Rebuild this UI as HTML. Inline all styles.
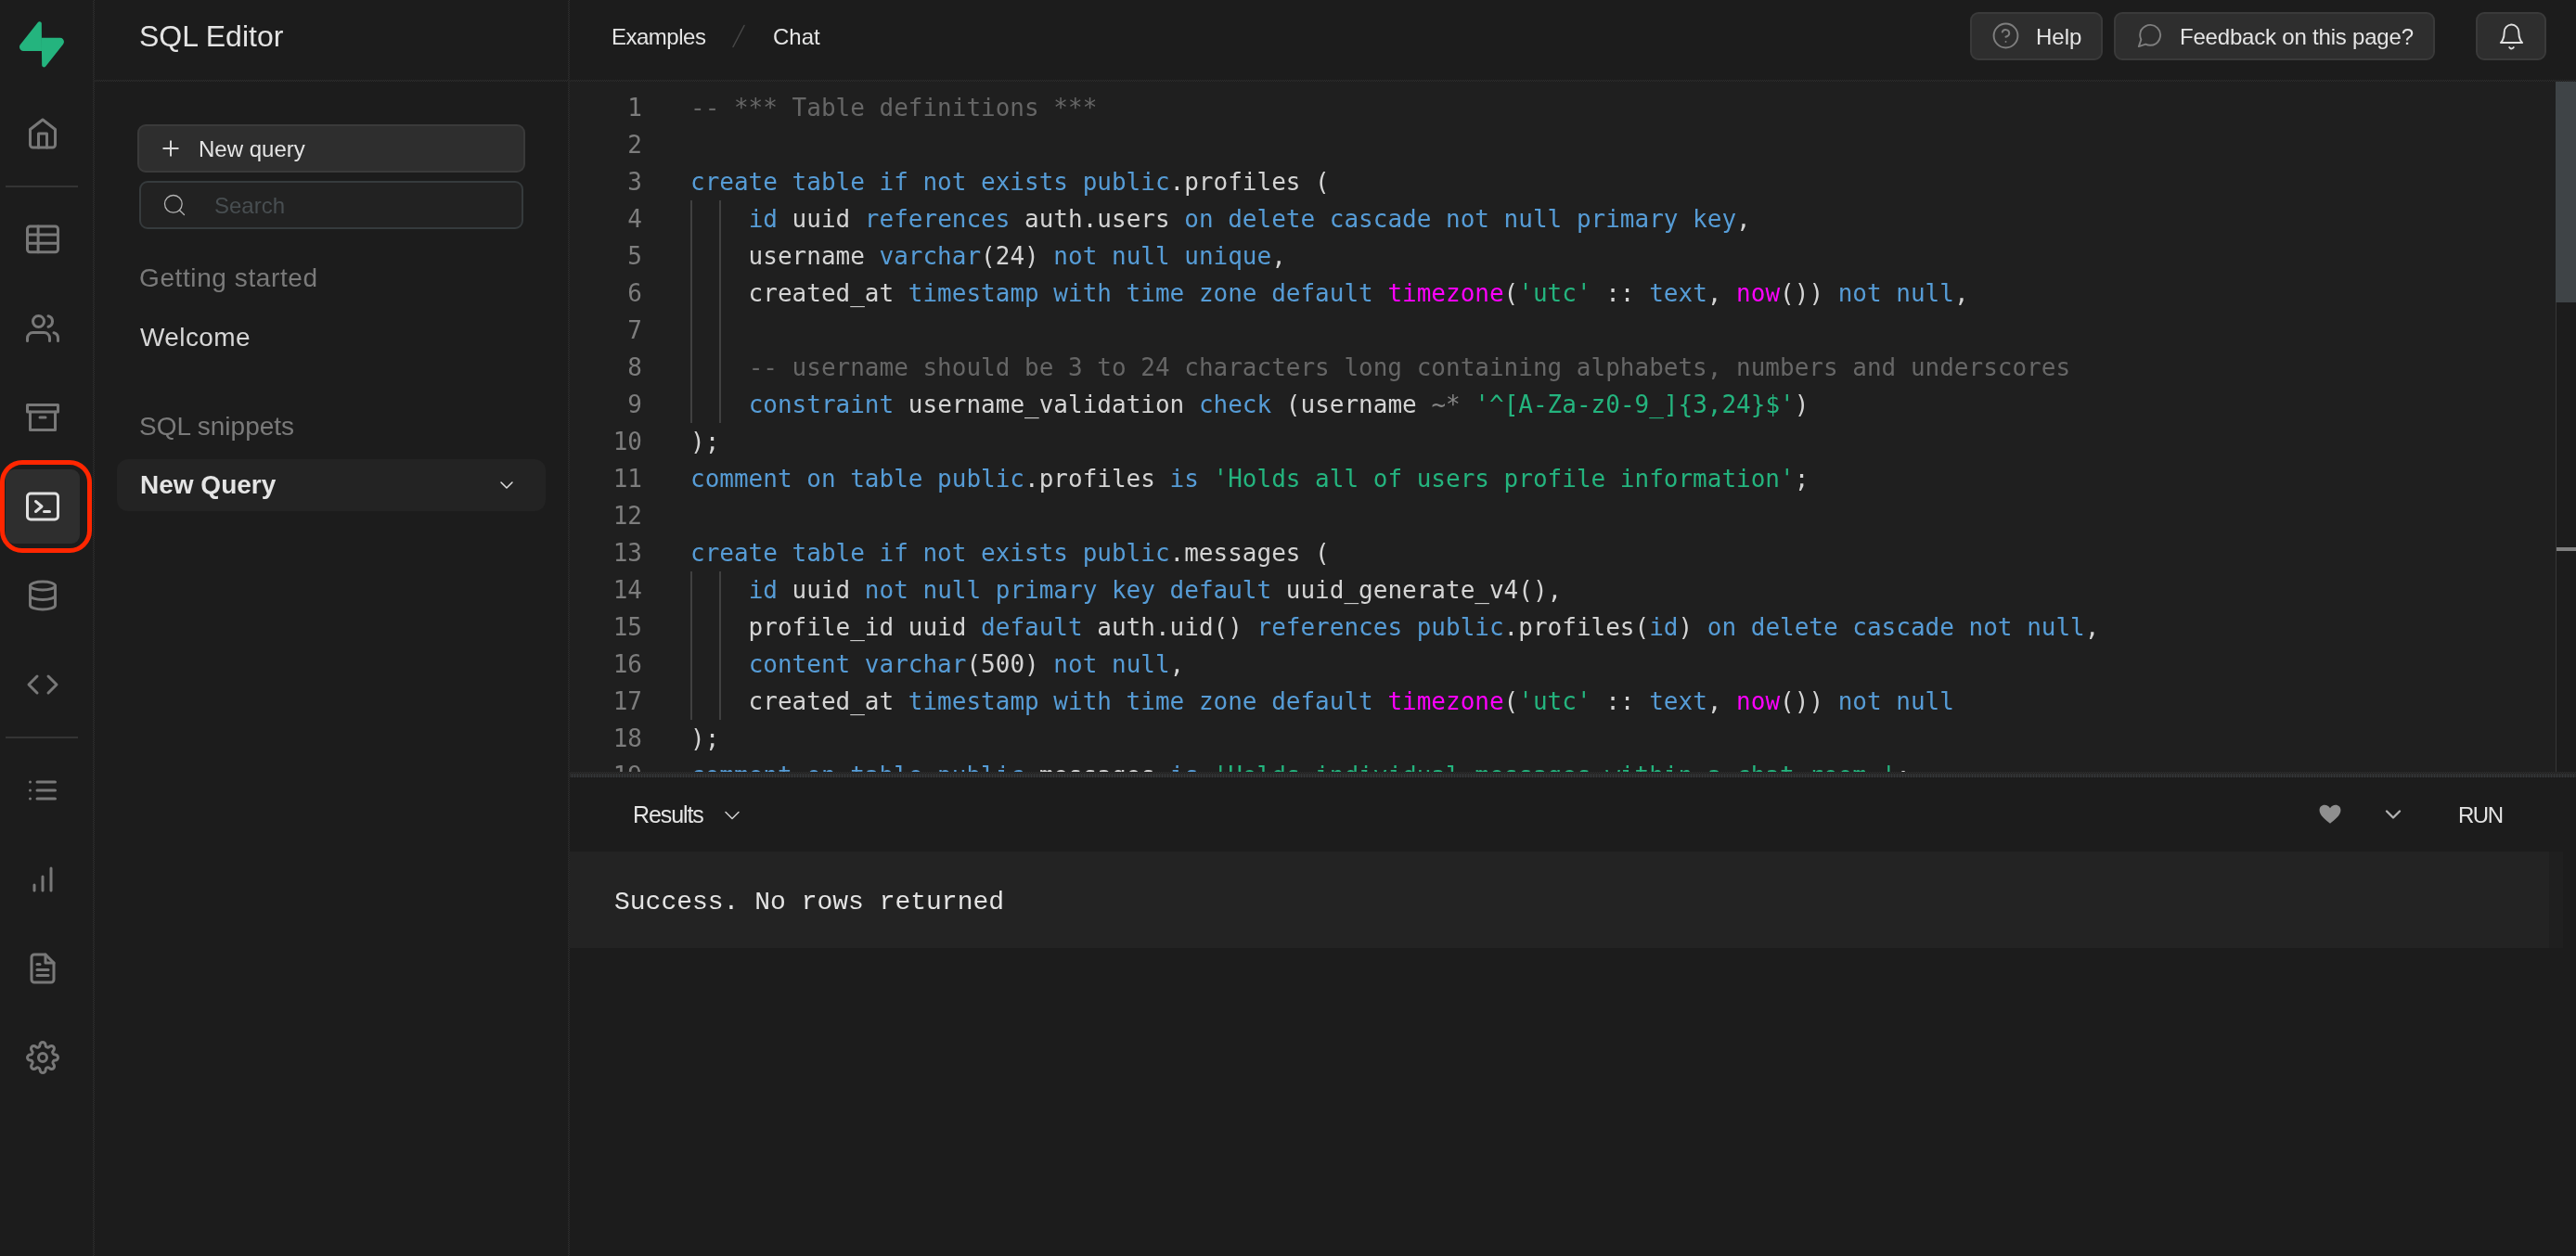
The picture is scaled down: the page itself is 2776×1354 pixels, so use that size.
<!DOCTYPE html>
<html lang="en">
<head>
<meta charset="utf-8">
<title>SQL Editor</title>
<style>
*{box-sizing:border-box;margin:0;padding:0}
html,body{width:2776px;height:1354px;overflow:hidden;background:#1c1c1c}
body{position:relative;font-family:"Liberation Sans",sans-serif;color:#e4e4e4}
.abs{position:absolute}
.t{position:absolute;white-space:nowrap;line-height:1}
/* icon rail */
#rail{left:0;top:0;width:100px;height:1354px;background:#1c1c1c}
#railb{left:100px;top:0;width:2px;height:1354px;background:repeating-conic-gradient(#2e2e2e 0 25%,#1c1c1c 0 50%) 0 0/2px 2px}
.ico{position:absolute;left:28px;width:36px;height:36px;fill:none;stroke:#787878;stroke-width:2;stroke-linecap:round;stroke-linejoin:round}
.sep{position:absolute;left:6px;width:78px;height:2px;background:#343434}
/* side panel */
#side{left:102px;top:0;width:510px;height:1354px;background:#1c1c1c}
#sideb{left:612px;top:0;width:2px;height:1354px;background:repeating-conic-gradient(#2e2e2e 0 25%,#1c1c1c 0 50%) 0 0/2px 2px}
#hdrb{left:102px;top:86px;width:2674px;height:2px;background:repeating-conic-gradient(#2e2e2e 0 25%,#1c1c1c 0 50%) 0 0/2px 2px}
.btn{position:absolute;background:#2e2e2e;border:2px solid #3a3a3a;border-radius:9px}
/* editor */
#ed{left:614px;top:88px;width:2162px;height:744px;background:#1f1f1f;overflow:hidden}
.ln{position:absolute;left:0;width:78px;text-align:right;color:#7d7d7d;font:26px/40px "DejaVu Sans Mono","Liberation Mono",monospace;white-space:pre}
.cl{position:absolute;left:130px;color:#d4d4d4;font:26px/40px "DejaVu Sans Mono","Liberation Mono",monospace;white-space:pre;height:40px}
.k{color:#569cd6}.s{color:#24b47e}.c{color:#666666}.f{color:#ff00ff}.o{color:#848484}
.g{position:absolute;width:2px;background:#404040}
</style>
</head>
<body>
<div id="app" style="position:absolute;left:0;top:0;width:2776px;height:1354px;will-change:transform">
<!-- RAIL -->
<div id="rail" class="abs"></div>
<div id="railb" class="abs"></div>
<div id="side" class="abs"></div>
<div id="sideb" class="abs"></div>
<div id="hdrb" class="abs"></div>

<!-- logo -->
<svg class="abs" style="left:21px;top:23px" width="48" height="50" viewBox="0 0 109 113"><path d="M63.7 110.3c-2.9 3.6-8.7 1.6-8.8-3l-1-67.3h45.2c8.200 0 12.800 9.500 7.700 15.900z" fill="#24b47e"/><path d="M45.300 2.100c2.900-3.600 8.700-1.600 8.800 3l.4 67.300H9.800c-8.200 0-12.800-9.500-7.700-15.900z" fill="#24b47e"/></svg>
<svg class="ico" style="top:126px" viewBox="0 0 24 24"><path d="M3 9l9-7 9 7v11a2 2 0 0 1-2 2H5a2 2 0 0 1-2-2z"/><polyline points="9 22 9 12 15 12 15 22"/></svg>
<div class="sep" style="top:200px"></div>
<svg class="ico" style="top:240px;stroke-width:3" viewBox="0 0 36 36"><rect x="1.500" y="3.900" width="33" height="27.800" rx="3"/><path d="M1.500 13.100h33M1.500 22.300h33M13.100 3.900v27.800"/></svg>
<svg class="ico" style="top:336px" viewBox="0 0 24 24"><path d="M17 21v-2a4 4 0 0 0-4-4H5a4 4 0 0 0-4 4v2"/><circle cx="9" cy="7" r="4"/><path d="M23 21v-2a4 4 0 0 0-3-3.870"/><path d="M16 3.130a4 4 0 0 1 0 7.750"/></svg>
<svg class="ico" style="top:432px" viewBox="0 0 24 24"><polyline points="21 8 21 21 3 21 3 8"/><rect x="1" y="3" width="22" height="5"/><line x1="10" y1="12" x2="14" y2="12"/></svg>
<!-- active -->
<div class="abs" style="left:6px;top:506px;width:80px;height:80px;border-radius:9px;background:#2e2e2e"></div>
<div class="abs" style="left:0px;top:496px;width:99px;height:100px;border-radius:24px;border:5px solid #ff2600"></div>
<svg class="ico" style="top:528px;stroke:#e0e0e0;stroke-width:3" viewBox="0 0 36 36"><rect x="1.500" y="4.100" width="33" height="27.800" rx="3.500"/><path d="M10.500 12.500l6.500 5.500-6.500 5.500M19.500 23.500h6"/></svg>
<svg class="ico" style="top:624px" viewBox="0 0 24 24"><ellipse cx="12" cy="5" rx="9" ry="3"/><path d="M21 12c0 1.660-4 3-9 3s-9-1.340-9-3"/><path d="M3 5v14c0 1.660 4 3 9 3s9-1.340 9-3V5"/></svg>
<svg class="ico" style="top:720px" viewBox="0 0 24 24"><polyline points="16 18 22 12 16 6"/><polyline points="8 6 2 12 8 18"/></svg>
<div class="sep" style="top:794px"></div>
<svg class="ico" style="top:834px" viewBox="0 0 24 24"><line x1="8" y1="6" x2="21" y2="6"/><line x1="8" y1="12" x2="21" y2="12"/><line x1="8" y1="18" x2="21" y2="18"/><line x1="3" y1="6" x2="3.010" y2="6"/><line x1="3" y1="12" x2="3.010" y2="12"/><line x1="3" y1="18" x2="3.010" y2="18"/></svg>
<svg class="ico" style="top:930px" viewBox="0 0 24 24"><line x1="12" y1="20" x2="12" y2="10"/><line x1="18" y1="20" x2="18" y2="4"/><line x1="6" y1="20" x2="6" y2="16"/></svg>
<svg class="ico" style="top:1026px" viewBox="0 0 24 24"><path d="M14 2H6a2 2 0 0 0-2 2v16a2 2 0 0 0 2 2h12a2 2 0 0 0 2-2V8z"/><polyline points="14 2 14 8 20 8"/><line x1="16" y1="13" x2="8" y2="13"/><line x1="16" y1="17" x2="8" y2="17"/><polyline points="10 9 9 9 8 9"/></svg>
<svg class="ico" style="top:1122px" viewBox="0 0 24 24"><circle cx="12" cy="12" r="3"/><path d="M19.400 15a1.650 1.650 0 0 0 .330 1.820l.060.060a2 2 0 0 1 0 2.830 2 2 0 0 1-2.830 0l-.060-.060a1.650 1.650 0 0 0-1.820-.330 1.650 1.650 0 0 0-1 1.510V21a2 2 0 0 1-2 2 2 2 0 0 1-2-2v-.090A1.650 1.650 0 0 0 9 19.400a1.650 1.650 0 0 0-1.820.330l-.060.060a2 2 0 0 1-2.830 0 2 2 0 0 1 0-2.830l.060-.060a1.650 1.650 0 0 0 .330-1.820 1.650 1.650 0 0 0-1.510-1H3a2 2 0 0 1-2-2 2 2 0 0 1 2-2h.090A1.650 1.650 0 0 0 4.600 9a1.650 1.650 0 0 0-.330-1.820l-.060-.060a2 2 0 0 1 0-2.830 2 2 0 0 1 2.830 0l.060.060a1.650 1.650 0 0 0 1.820.330H9a1.650 1.650 0 0 0 1-1.510V3a2 2 0 0 1 2-2 2 2 0 0 1 2 2v.090a1.650 1.650 0 0 0 1 1.510 1.650 1.650 0 0 0 1.820-.330l.060-.060a2 2 0 0 1 2.830 0 2 2 0 0 1 0 2.830l-.060.060a1.650 1.650 0 0 0-.330 1.820V9a1.650 1.650 0 0 0 1.510 1H21a2 2 0 0 1 2 2 2 2 0 0 1-2 2h-.090a1.650 1.650 0 0 0-1.510 1z"/></svg>

<!-- SIDE PANEL -->
<div class="t" id="title" style="left:150px;top:23px;font-size:32px;color:#e4e4e4">SQL Editor</div>
<div class="btn" style="left:148px;top:134px;width:418px;height:52px"></div>
<svg class="abs" style="left:172px;top:148px;fill:none;stroke:#d8d8d8;stroke-width:2" width="24" height="24" viewBox="0 0 24 24"><path d="M12 3.500v17M3.500 12h17"/></svg>
<div class="t" id="nq" style="left:214px;top:149px;font-size:24px;color:#e4e4e4">New query</div>
<div class="abs" style="left:150px;top:195px;width:414px;height:52px;border-radius:9px;border:2px solid #363b3d;background:#222"></div>
<svg class="abs" style="left:174px;top:207px;fill:none;stroke:#b4b4b4;stroke-width:1.100;stroke-linecap:round" width="28" height="28" viewBox="0 0 24 24"><circle cx="11" cy="11" r="8"/><line x1="21" y1="21" x2="16.650" y2="16.650"/></svg>
<div class="t" id="srch" style="left:231px;top:210px;font-size:24px;color:#484e51">Search</div>
<div class="t" id="gs" style="left:150px;top:286px;font-size:28px;color:#7a7a7a;letter-spacing:.6px">Getting started</div>
<div class="t" id="wel" style="left:151px;top:350px;font-size:28px;color:#d6d6d6;letter-spacing:.4px">Welcome</div>
<div class="t" id="snip" style="left:150px;top:446px;font-size:28px;color:#7a7a7a">SQL snippets</div>
<div class="abs" style="left:126px;top:495px;width:462px;height:56px;border-radius:12px;background:#232323"></div>
<div class="t" id="nqb" style="left:151px;top:509px;font-size:28px;font-weight:bold;color:#e4e4e4">New Query</div>
<svg class="abs" style="left:534px;top:511px;fill:none;stroke:#e2e2e2;stroke-width:1.500;stroke-linecap:round;stroke-linejoin:round" width="24" height="24" viewBox="0 0 24 24"><polyline points="6 9 12 15 18 9"/></svg>


<!-- HEADER -->
<div class="t" id="bc1" style="left:659px;top:28px;font-size:24px;color:#e4e4e4;letter-spacing:-.5px">Examples</div>
<svg class="abs" style="left:784px;top:22px;fill:none;stroke:#474747;stroke-width:1.500;stroke-linecap:round" width="24" height="34" viewBox="0 0 24 34"><line x1="18" y1="5.500" x2="6" y2="28.500"/></svg>
<div class="t" id="bc2" style="left:833px;top:28px;font-size:24px;color:#e4e4e4">Chat</div>
<div class="btn" style="left:2123px;top:13px;width:143px;height:52px"></div>
<svg class="abs" style="left:2145.500px;top:23px;fill:none;stroke:#7e7e7e;stroke-width:1.500;stroke-linecap:round;stroke-linejoin:round" width="31" height="31" viewBox="0 0 24 24"><circle cx="12" cy="12" r="10"/><path d="M9.090 9a3 3 0 0 1 5.830 1c0 2-3 3-3 3"/><line x1="12" y1="17" x2="12.010" y2="17"/></svg>
<div class="t" id="help" style="left:2194px;top:28px;font-size:24px;color:#e4e4e4">Help</div>
<div class="btn" style="left:2278px;top:13px;width:346px;height:52px"></div>
<svg class="abs" style="left:2300.700px;top:23px;fill:none;stroke:#7e7e7e;stroke-width:1.500;stroke-linecap:round;stroke-linejoin:round" width="31" height="31" viewBox="0 0 24 24"><path d="M21 11.500a8.380 8.380 0 0 1-.900 3.800 8.500 8.500 0 0 1-7.600 4.700 8.380 8.380 0 0 1-3.800-.900L3 21l1.900-5.700a8.380 8.380 0 0 1-.900-3.800 8.500 8.500 0 0 1 4.700-7.600 8.380 8.380 0 0 1 3.800-.900h.500a8.480 8.480 0 0 1 8 8v.500z"/></svg>
<div class="t" id="fb" style="left:2349px;top:28px;font-size:24px;color:#e4e4e4;letter-spacing:-.2px">Feedback on this page?</div>
<div class="btn" style="left:2668px;top:13px;width:76px;height:52px"></div>
<svg class="abs" style="left:2690.800px;top:24.100px;fill:none;stroke:#e0e0e0;stroke-width:1.500;stroke-linecap:round;stroke-linejoin:round" width="31" height="31" viewBox="0 0 24 24"><path d="M18 8A6 6 0 0 0 6 8c0 7-3 9-3 9h18s-3-2-3-9"/><path d="M13.730 21a2 2 0 0 1-3.460 0"/></svg>
<!-- EDITOR -->
<div id="ed" class="abs">
<div class="ln" style="top:8px">1</div>
<div class="cl" style="top:8px"><span class="c">-- *** Table definitions ***</span></div>
<div class="ln" style="top:48px">2</div>
<div class="ln" style="top:88px">3</div>
<div class="cl" style="top:88px"><span class="k">create table if not exists public</span>.profiles (</div>
<div class="ln" style="top:128px">4</div>
<div class="cl" style="top:128px">    <span class="k">id</span> uuid <span class="k">references</span> auth.users <span class="k">on delete cascade not null primary key</span>,</div>
<div class="ln" style="top:168px">5</div>
<div class="cl" style="top:168px">    username <span class="k">varchar</span>(24) <span class="k">not null unique</span>,</div>
<div class="ln" style="top:208px">6</div>
<div class="cl" style="top:208px">    created_at <span class="k">timestamp with time zone default</span> <span class="f">timezone</span>(<span class="s">'utc'</span> :: <span class="k">text</span>, <span class="f">now</span>()) <span class="k">not null</span>,</div>
<div class="ln" style="top:248px">7</div>
<div class="ln" style="top:288px">8</div>
<div class="cl" style="top:288px">    <span class="c">-- username should be 3 to 24 characters long containing alphabets, numbers and underscores</span></div>
<div class="ln" style="top:328px">9</div>
<div class="cl" style="top:328px">    <span class="k">constraint</span> username_validation <span class="k">check</span> (username <span class="o">~*</span> <span class="s">'^[A-Za-z0-9_]{3,24}$'</span>)</div>
<div class="ln" style="top:368px">10</div>
<div class="cl" style="top:368px">);</div>
<div class="ln" style="top:408px">11</div>
<div class="cl" style="top:408px"><span class="k">comment on table public</span>.profiles <span class="k">is</span> <span class="s">'Holds all of users profile information'</span>;</div>
<div class="ln" style="top:448px">12</div>
<div class="ln" style="top:488px">13</div>
<div class="cl" style="top:488px"><span class="k">create table if not exists public</span>.messages (</div>
<div class="ln" style="top:528px">14</div>
<div class="cl" style="top:528px">    <span class="k">id</span> uuid <span class="k">not null primary key default</span> uuid_generate_v4(),</div>
<div class="ln" style="top:568px">15</div>
<div class="cl" style="top:568px">    profile_id uuid <span class="k">default</span> auth.uid() <span class="k">references public</span>.profiles(<span class="k">id</span>) <span class="k">on delete cascade not null</span>,</div>
<div class="ln" style="top:608px">16</div>
<div class="cl" style="top:608px">    <span class="k">content varchar</span>(500) <span class="k">not null</span>,</div>
<div class="ln" style="top:648px">17</div>
<div class="cl" style="top:648px">    created_at <span class="k">timestamp with time zone default</span> <span class="f">timezone</span>(<span class="s">'utc'</span> :: <span class="k">text</span>, <span class="f">now</span>()) <span class="k">not null</span></div>
<div class="ln" style="top:688px">18</div>
<div class="cl" style="top:688px">);</div>
<div class="ln" style="top:728px">19</div>
<div class="cl" style="top:728px"><span class="k">comment on table public</span>.messages <span class="k">is</span> <span class="s">'Holds individual messages within a chat room.'</span>;</div>
<div class="g" style="left:130px;top:128px;height:240px"></div>
<div class="g" style="left:161.29999999999995px;top:128px;height:240px"></div>
<div class="g" style="left:130px;top:528px;height:160px"></div>
<div class="g" style="left:161.29999999999995px;top:528px;height:160px"></div>
<div class="abs" style="left:2140px;top:0;width:22px;height:744px;background:#1c1c1c;border-left:1px solid #363636"></div>
<div class="abs" style="left:2140px;top:0;width:22px;height:238px;background:#3f4447"></div>
<div class="abs" style="left:2141px;top:502px;width:21px;height:4px;background:#7f7f7f"></div>
</div>

<!-- RESULTS -->
<div class="abs" style="left:614px;top:832px;width:2162px;height:2px;background:repeating-conic-gradient(#2e2e2e 0 25%,#1f1f1f 0 50%) 0 0/2px 2px"></div>
<div class="abs" style="left:614px;top:834px;width:2162px;height:4px;background:#2a2a2a"></div>
<div class="abs" style="left:614px;top:835px;width:2162px;height:1px;background:repeating-linear-gradient(90deg,transparent 0 2px,#3c4246 2px 3px)"></div>
<div class="abs" style="left:614px;top:837px;width:2162px;height:1px;background:repeating-linear-gradient(90deg,transparent 0 2px,#3c4246 2px 3px)"></div>
<div class="t" id="res" style="left:682px;top:866px;font-size:25px;color:#e4e4e4;letter-spacing:-1.100px">Results</div>
<svg class="abs" style="left:775px;top:864.500px;fill:none;stroke:#d0d0d0;stroke-width:1.300;stroke-linecap:round;stroke-linejoin:round" width="28" height="28" viewBox="0 0 24 24"><polyline points="6 9 12 15 18 9"/></svg>
<svg class="abs" style="left:2499px;top:867px" width="24" height="22" viewBox="0 0 26 24"><path d="M13 22.500C8 18.500 0.500 13 0.500 7 0.500 3.200 3.300 0.800 6.500 0.800 9.300 0.800 11.600 2.300 13 4.600 14.400 2.300 16.700 0.800 19.500 0.800 22.700 0.800 25.500 3.200 25.500 7 25.500 13 18 18.500 13 22.500z" fill="#8f8f8f"/></svg>
<svg class="abs" style="left:2565px;top:864px;fill:none;stroke:#b4b4b4;stroke-width:2;stroke-linecap:round;stroke-linejoin:round" width="28" height="28" viewBox="0 0 24 24"><polyline points="6 9 12 15 18 9"/></svg>
<div class="t" id="run" style="left:2649px;top:867px;font-size:24px;color:#e4e4e4;letter-spacing:-1.500px">RUN</div>
<div class="abs" style="left:614px;top:918px;width:2133px;height:104px;background:#232323"></div>
<div class="abs" style="left:2747px;top:918px;width:15px;height:104px;background:#1f1f1f"></div>
<div class="t" id="succ" style="left:662px;top:959px;font:28px/1 'Liberation Mono',monospace;color:#e4e4e4">Success. No rows returned</div>


</div>
</body>
</html>
